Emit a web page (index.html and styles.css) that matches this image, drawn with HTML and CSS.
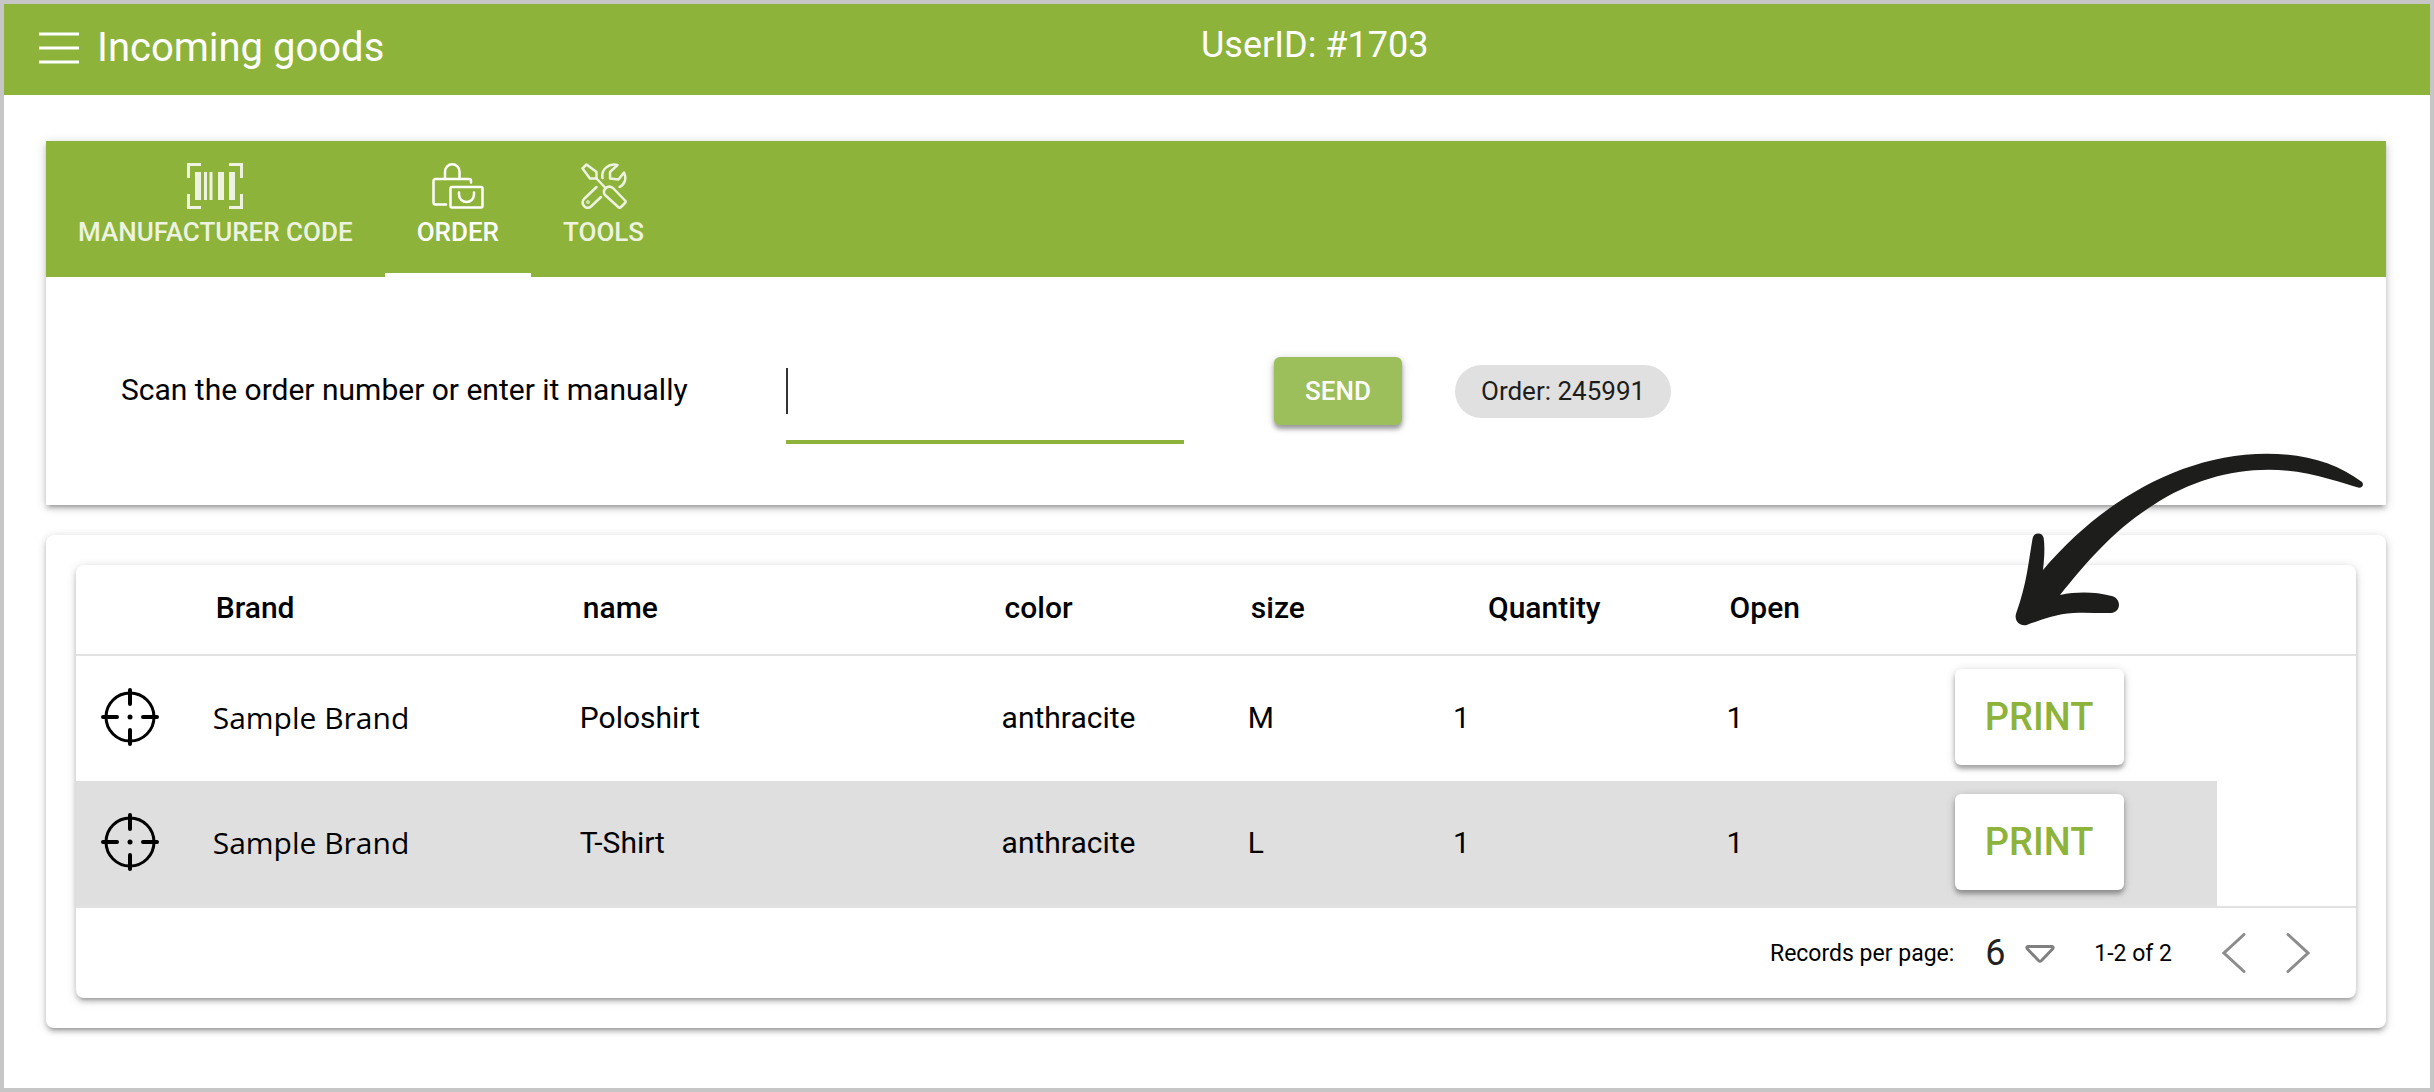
FILE: index.html
```html
<!DOCTYPE html>
<html lang="en">

<head>
    <meta charset="UTF-8">
    <meta name="viewport" content="width=device-width, initial-scale=1.0">
    <title>Incoming goods</title>
    <link rel="stylesheet" href="styles.css">
</head>

<body>
    <!-- shared icon -->
    <svg class="sprite" aria-hidden="true">
        <symbol id="target" viewBox="0 0 58 58">
            <g fill="none" stroke="#000" stroke-width="3">
                <circle cx="29" cy="29" r="24" />
                <path d="M29 2v14M29 42v14M2 29h14M42 29h14" stroke-width="4" stroke-linecap="round" />
            </g>
            <circle cx="29" cy="29" r="2.500" />
        </symbol>
    </svg>

    <div class="app">
        <header class="topbar">
            <div class="topbar-left">
                <button class="menu-btn" type="button" aria-label="Menu">
                    <svg width="40" height="32" viewBox="0 0 40 32">
                        <path d="M0 2h40M0 16h40M0 30h40" stroke="#fff" stroke-width="3" />
                    </svg>
                </button>
                <h1 class="title">Incoming goods</h1>
            </div>
            <div class="user">UserID: #1703</div>
        </header>

        <main class="content">
            <section class="card scan">
                <nav class="tabs">
                    <button class="tab" type="button">
                        <svg width="56" height="46" viewBox="0 0 56 46">
                            <path d="M14 1.500H1.500V15M42 1.500h12.500V15M14 44.500H1.500V31M42 44.500h12.500V31" fill="none" stroke="#fff" stroke-width="3" />
                            <path d="M8 9h6v28H8zM17 9h3v28h-3zM22.500 9h3v28h-3zM31 9h6v28h-6zM42 9h6v28h-6z" fill="#fff" />
                        </svg>
                        <span>MANUFACTURER CODE</span>
                    </button>
                    <button class="tab active" type="button">
                        <svg width="52" height="46" viewBox="0 0 52 46">
                            <g fill="none" stroke="#fff" stroke-width="2.500" stroke-linecap="round" stroke-linejoin="round">
                                <path d="M13 15V8.500a7 7 0 0 1 14.500 0V15" />
                                <path d="M14 41.500H3.500a2 2 0 0 1-2-2V18a2 2 0 0 1 2-2H37a2 2 0 0 1 2 2v1.500" />
                                <rect x="18.500" y="24" width="32" height="20.500" rx="1.500" />
                                <path d="M27 29.500v2a7.500 7.500 0 0 0 15 0v-2" />
                            </g>
                        </svg>
                        <span>ORDER</span>
                    </button>
                    <button class="tab" type="button">
                        <svg width="46" height="46" viewBox="0 0 46 46">
                            <g fill="none" stroke="#fff" stroke-width="2.500" stroke-linecap="round" stroke-linejoin="round">
                                <path d="M1.500 5.500L5.500 1.500L15.500 9V15.500H9z" />
                                <path d="M15.500 15.500L24.500 25" />
                                <path d="M24.500 25.500q3.500-3.500 7.500-.5L44.500 38Q45 39 44 40L39.500 44.500Q38.500 45.200 37.500 44.300L24 32Q21.500 28.500 24.500 25.500z" />
                                <path d="M21.500 15C20 6 28 0 36.500 2L29 9V15.500L37.500 16.500L43 9.500C46 16 43.500 21.500 38.500 24" />
                                <path d="M15.500 24L3 36C-1 41 5 47.500 10 43.500L20 34" />
                                <circle cx="7" cy="39" r=".6" />
                            </g>
                        </svg>
                        <span>TOOLS</span>
                    </button>
                </nav>
                <form class="scan-form">
                    <label class="scan-label" for="order">Scan the order number or enter it manually</label>
                    <div class="field">
                        <input id="order" type="text" autocomplete="off">
                        <span class="caret"></span>
                    </div>
                    <button class="send" type="button">SEND</button>
                    <span class="chip">Order: 245991</span>
                </form>
            </section>

            <section class="card results">
                <div class="card table-card">
                    <table class="items">
                        <colgroup>
                            <col class="c-target">
                            <col class="c-brand">
                            <col class="c-name">
                            <col class="c-color">
                            <col class="c-size">
                            <col class="c-qty">
                            <col class="c-open">
                            <col class="c-print">
                            <col>
                        </colgroup>
                        <thead>
                            <tr>
                                <th></th>
                                <th>Brand</th>
                                <th>name</th>
                                <th>color</th>
                                <th>size</th>
                                <th class="qty">Quantity</th>
                                <th>Open</th>
                                <th></th>
                                <th></th>
                            </tr>
                        </thead>
                        <tbody>
                            <tr>
                                <td><svg class="target"><use href="#target" /></svg></td>
                                <td class="brand">Sample Brand</td>
                                <td>Poloshirt</td>
                                <td>anthracite</td>
                                <td>M</td>
                                <td>1</td>
                                <td>1</td>
                                <td><button class="print" type="button">PRINT</button></td>
                                <td></td>
                            </tr>
                            <tr class="selected">
                                <td><svg class="target"><use href="#target" /></svg></td>
                                <td class="brand">Sample Brand</td>
                                <td>T-Shirt</td>
                                <td>anthracite</td>
                                <td>L</td>
                                <td>1</td>
                                <td>1</td>
                                <td><button class="print" type="button">PRINT</button></td>
                                <td></td>
                            </tr>
                        </tbody>
                    </table>
                    <div class="pager">
                        <label for="rows">Records per page:</label>
                        <div class="rows">
                            <select id="rows">
                                <option>6</option>
                            </select>
                            <svg class="arrow-down" width="30" height="18" viewBox="0 0 30 18">
                                <path d="M3 1.500H27Q29 2 27.500 4L16.500 15.500Q15 17 13.500 15.500L2.500 4Q1 2 3 1.500z" fill="none" stroke="#808080" stroke-width="3" />
                            </svg>
                        </div>
                        <span class="range">1-2 of 2</span>
                        <button class="page-btn" type="button" aria-label="Previous page">
                            <svg width="24" height="40" viewBox="0 0 24 40">
                                <path d="M22 1.500L2 20l20 18.500" />
                            </svg>
                        </button>
                        <button class="page-btn" type="button" aria-label="Next page">
                            <svg width="24" height="40" viewBox="0 0 24 40">
                                <path d="M2 1.500L22 20L2 38.500" />
                            </svg>
                        </button>
                    </div>
                </div>
                <!-- hint pointing at the print button -->
                <svg class="hint" viewBox="225 73 1047 519" aria-hidden="true">
                    <path fill="#1d1d1b" d="M1266 160C1190 103 1095 75 980 75C720 76 480 222 309 424C313 388 315 355 311 328C307 310 282 311 278 328C266 395 261 465 228 555C222 578 240 594 260 589C300 575 345 556 400 553C440 551 475 554 513 553C544 550 545 509 515 502C465 490 415 488 360 499C440 400 520 305 640 229C800 125 990 95 1170 152C1200 160 1230 170 1257 177C1268 177 1272 168 1266 160z" />
                </svg>
            </section>
        </main>
    </div>
</body>

</html>
```
FILE: styles.css
```css
* {
    box-sizing: border-box;
    margin: 0;
    padding: 0;
}

body {
    font-family: Roboto, "Liberation Sans", sans-serif;
    font-size: 30px;
    color: #000;
    background: #fff;
}

button {
    font-family: inherit;
    border: none;
    background: none;
    cursor: pointer;
}

svg {
    display: block;
}

.sprite {
    position: absolute;
    width: 0;
    height: 0;
}

.app {
    min-height: 100vh;
    border: 4px solid #c6c6c6;
}

/* top bar */
.topbar {
    display: grid;
    grid-template-columns: 1fr 1fr;
    height: 91px;
    padding: 0 35px;
    color: #fff;
    background: #8db33a;
}

.topbar-left {
    display: flex;
    align-items: center;
    gap: 18px;
    padding-bottom: 4px;
}

.title {
    font-size: 40px;
    font-weight: 400;
}

.user {
    padding-top: 21px;
    font-size: 36px;
    line-height: 40px;
    margin-left: -16px;
}

.content {
    display: flex;
    flex-direction: column;
    gap: 30px;
    padding: 46px 44px 56px 42px;
}

.card {
    border-radius: 8px;
    background: #fff;
    box-shadow: 0 2px 10px rgba(0, 0, 0, .2), 0 4px 4px rgba(0, 0, 0, .14), 0 6px 2px -4px rgba(0, 0, 0, .12);
}

/* tabs */
.scan {
    border-radius: 0;
}

.tabs {
    display: flex;
    height: 136px;
    background: #8db33a;
}

.tab {
    display: flex;
    flex-direction: column;
    align-items: center;
    gap: 8px;
    padding: 22px 32px 0;
    font-size: 26px;
    line-height: 30px;
    font-weight: 500;
    color: #fff;
    border-bottom: 4px solid transparent;
}

.tab > * {
    opacity: .85;
}

.tab.active {
    border-bottom-color: #fff;
}

.tab.active > * {
    opacity: 1;
}

/* scan form */
.scan-form {
    display: flex;
    align-items: center;
    height: 228px;
    padding-left: 75px;
}

.scan-label {
    min-width: 575px;
    padding-bottom: 3px;
}

.field {
    position: relative;
    width: 398px;
    margin: 0 90px;
}

.field input {
    display: block;
    width: 100%;
    height: 106px;
    font: inherit;
    border: none;
    border-bottom: 4px solid #8db33a;
    outline: none;
    background: none;
}

.caret {
    position: absolute;
    left: 0;
    top: 30px;
    width: 2px;
    height: 46px;
    background: #333;
}

.send {
    width: 128px;
    height: 68px;
    font-size: 26px;
    font-weight: 500;
    color: #fff;
    border-radius: 6px;
    background: #9cbf5c;
    box-shadow: 0 2px 10px rgba(0, 0, 0, .2), 0 4px 4px rgba(0, 0, 0, .3);
}

.chip {
    margin-left: 53px;
    padding: 0 26px;
    font-size: 26px;
    line-height: 53px;
    color: #1d1d1b;
    border-radius: 27px;
    background: #e0e0e0;
}

/* results */
.results {
    position: relative;
    padding: 30px;
}

.items {
    width: 100%;
    table-layout: fixed;
    border-collapse: separate;
    border-spacing: 0;
}

.c-target {
    width: 4.9%;
}

.c-brand {
    width: 16.1%;
}

.c-name {
    width: 18.5%;
}

.c-color {
    width: 10.8%;
}

.c-size {
    width: 9%;
}

.c-qty {
    width: 12%;
}

.c-open {
    width: 10%;
}

.c-print {
    width: 12.6%;
}

.items th,
.items td {
    text-align: left;
    padding-left: 25px;
}

.items th {
    height: 91px;
    padding-left: 28px;
    padding-bottom: 4px;
    font-weight: 500;
    border-bottom: 2px solid #e2e2e2;
}

.items .qty {
    padding-left: 60px;
}

.items td {
    height: 125px;
    padding-bottom: 3px;
}

.items .brand {
    font-family: "Open Sans", "Liberation Sans", sans-serif;
}

.selected td:not(:last-child) {
    background: #dfdfdf;
}

.target {
    width: 58px;
    height: 58px;
}

.print {
    display: block;
    width: 169px;
    height: 96px;
    font-size: 38px;
    font-weight: 500;
    color: #8db33a;
    border-radius: 6px;
    background: #fff;
    box-shadow: 0 2px 10px rgba(0, 0, 0, .2), 0 4px 4px rgba(0, 0, 0, .26);
}

.pager {
    display: flex;
    align-items: center;
    justify-content: flex-end;
    height: 92px;
    padding-right: 46px;
    font-size: 23px;
    border-top: 2px solid #e2e2e2;
}

.rows {
    position: relative;
    width: 70px;
    margin: 0 39px 0 31px;
}

.rows select {
    width: 100%;
    font-family: inherit;
    font-size: 36px;
    color: #222;
    border: none;
    appearance: none;
    background: none;
}

.arrow-down {
    position: absolute;
    right: 0;
    top: 13px;
    pointer-events: none;
}

.range {
    margin-right: 10px;
}

.page-btn {
    margin-left: 40px;
}

.page-btn path {
    fill: none;
    stroke: #8c8c8c;
    stroke-width: 3;
    stroke-linecap: round;
}

.hint {
    position: absolute;
    right: 22px;
    top: -82px;
    width: 349px;
    height: 173px;
    pointer-events: none;
}
```
